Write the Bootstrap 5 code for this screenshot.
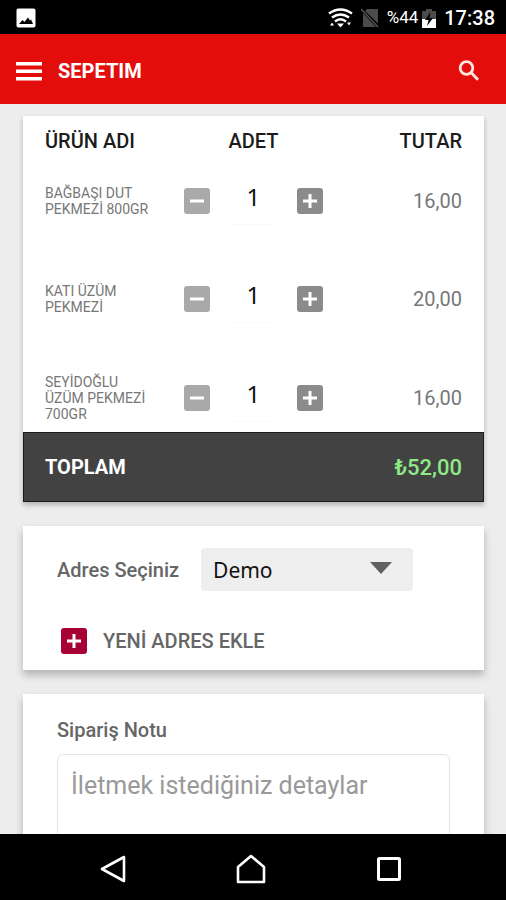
<!DOCTYPE html>
<html lang="tr">
<head>
<meta charset="utf-8">
<meta name="viewport" content="width=device-width, initial-scale=1">
<title>Sepetim</title>
<link href="https://cdn.jsdelivr.net/npm/bootstrap@5.3.0/dist/css/bootstrap.min.css" rel="stylesheet">
<style>
body { font-family: Roboto, "Noto Sans", sans-serif; background: #ededed; color: #666; }
svg { display: block; }
.status-bar { height: 34px; padding: 2px 11px 0 16px; font-size: 17px; }
.status-bar .clock { font-size: 20px; font-weight: 500; }
.app-bar { height: 70px; padding: 3px 22px 0 12px; background: #e30e0c; }
.app-title { font-size: 20px; line-height: 24px; }
.content { padding: 12px 22px 0 23px; min-height: 0; }
.panel { background: #fff; padding: 22px 34px 12px; box-shadow: 0 5px 8px rgba(0,0,0,.25); }
.panel-note { padding-top: 24px; }
.cart { box-shadow: 0 3px 5px rgba(0,0,0,.25); background: #fff; table-layout: fixed; }
.cart th:first-child, .cart td:first-child { padding-left: 22px; }
.cart th:last-child, .cart td:last-child { padding-right: 22px; }
.cart thead th { height: 50px; font-size: 20px; font-weight: 500; color: #1c1c1c; }
.cart tbody td { height: 98px; padding-bottom: 30px; font-size: 20px; }
.cart tbody tr:last-child td { height: 70px; padding-bottom: 0; }
.cart tbody td.product { font-size: 14px; line-height: 16px; padding-right: 20px; color: #777; }
.cart tbody td.price { color: #777; }
.cart tfoot { background: #424242; outline: 1px solid #1b1b1b; outline-offset: -1px; }
.cart tfoot th { height: 70px; font-size: 20px; color: #fff; }
.cart tfoot td { font-size: 22px; font-weight: 500; color: #8ee986; }
.step { width: 26px; height: 26px; border-radius: 3px; background: #8b8b8b; }
.step-minus { background: #a9a9a9; }
.step-add { background: #a60034; }
.qty { width: 47px; height: 48px; font: 24px "Noto Sans", sans-serif; color: #111; border-bottom: 1px solid #fafafa; }
.field-label { font-size: 20px; line-height: 24px; font-weight: 500; color: #666; }
.address-box { margin-left: 22px; }
.address { width: 212px; height: 43px; padding: 0 12px; font: 21px "Noto Sans", sans-serif; color: #111; background: #eee; appearance: none; }
.caret { position: absolute; right: 21px; top: 14px; pointer-events: none; }
.add-address { margin-top: 33px; }
.note { height: 120px; margin-top: 12px; padding: 14px 13px; font-size: 25px; line-height: 34px; border: 1px solid #e4e4e4; border-radius: 6px; resize: none; }
.note::placeholder { color: #999; opacity: 1; }
.nav-keys { height: 66px; padding: 4px 104px 0 100px; }
</style>
<script src="https://cdn.jsdelivr.net/npm/bootstrap@5.3.0/dist/js/bootstrap.bundle.min.js"></script>
</head>
<body class="vh-100 d-flex flex-column overflow-hidden">
<div class="status-bar bg-black text-white d-flex align-items-center flex-shrink-0">
  <svg class="me-auto" width="20" height="20" viewBox="0 0 20 20"><rect x="0.5" y="0.5" width="19" height="19" rx="2" fill="#fff"/><path d="M3 16l3.500-4 2 2 3.500-4.500 2 3 1-1 2 4.500z" fill="#000"/></svg>
  <svg width="25" height="20" viewBox="0 0 25 20" fill="none" stroke="#fff" stroke-width="2.500"><path d="M1 5.500Q12.500-2.500 24 5.500M4 9.500Q12.500 3.500 21 9.500M7 13.500Q12.500 9 18 13.500"/><path d="M9 15.500h7l-3.500 4zM2 17.500l2-3 2 3zM19 14.500h4l-2 3z" fill="#fff" stroke="none"/></svg>
  <svg class="ms-2" width="18" height="20" viewBox="0 0 18 20"><path d="M6 1h11v14.500L4 3zM2 5l13 14H2z" fill="#4b4b4b"/><path d="M0 1l17 18" stroke="#555" stroke-width="1.500"/></svg>
  <span class="ms-2">%44</span>
  <svg class="ms-1" width="14" height="21" viewBox="0 0 14 21"><path d="M4 1h6v2h4v8H0V3h4z" fill="#4b4b4b"/><path d="M0 11h14v9H0z" fill="#fff"/><path d="M8.500 4L3 12h3.500L5 18l6-8H7.500z" fill="#000"/></svg>
  <span class="clock ms-1 ps-1">17:38</span>
</div>
<header class="app-bar text-white d-flex align-items-center flex-shrink-0">
  <button class="btn p-1 border-0 text-white" type="button" aria-label="Menü"><svg width="26" height="20" viewBox="0 0 26 20" fill="#fff"><path d="M0 1h26v3.500H0zM0 8.500h26V12H0zM0 16h26v3.500H0z"/></svg></button>
  <h1 class="app-title fw-bold mb-0 ms-2 ps-1">SEPETIM</h1>
  <button class="btn p-1 border-0 ms-auto" type="button" aria-label="Ara"><svg width="22" height="22" viewBox="0 0 22 22" fill="none" stroke="#ffe5e0" stroke-width="2.800"><circle cx="8.500" cy="8" r="6.300"/><path d="M13 12.500l7 7.200"/></svg></button>
</header>
<main class="content flex-grow-1 overflow-hidden">
  <table class="cart w-100">
    <colgroup><col style="width:33%"><col style="width:34%"><col style="width:33%"></colgroup>
    <thead><tr><th>ÜRÜN ADI</th><th class="text-center">ADET</th><th class="text-end">TUTAR</th></tr></thead>
    <tbody>
      <tr>
        <td class="product">BAĞBAŞI DUT PEKMEZİ 800GR</td>
        <td><div class="d-flex align-items-center justify-content-center gap-3"><button class="step step-minus border-0 p-0 flex-shrink-0 me-1" type="button" aria-label="Azalt"><svg width="26" height="26" viewBox="0 0 26 26"><path d="M6 13h14" stroke="#fff" stroke-width="3"/></svg></button><input class="qty border-top-0 border-start-0 border-end-0 text-center p-0 pb-2 bg-transparent" type="text" value="1" aria-label="Bağbaşı Dut Pekmezi adedi"><button class="step border-0 p-0 flex-shrink-0 ms-1" type="button" aria-label="Artır"><svg width="26" height="26" viewBox="0 0 26 26"><path d="M6 13h14M13 6v14" stroke="#fff" stroke-width="3"/></svg></button></div></td>
        <td class="price text-end">16,00</td>
      </tr>
      <tr>
        <td class="product">KATI ÜZÜM PEKMEZİ</td>
        <td><div class="d-flex align-items-center justify-content-center gap-3"><button class="step step-minus border-0 p-0 flex-shrink-0 me-1" type="button" aria-label="Azalt"><svg width="26" height="26" viewBox="0 0 26 26"><path d="M6 13h14" stroke="#fff" stroke-width="3"/></svg></button><input class="qty border-top-0 border-start-0 border-end-0 text-center p-0 pb-2 bg-transparent" type="text" value="1" aria-label="Katı Üzüm Pekmezi adedi"><button class="step border-0 p-0 flex-shrink-0 ms-1" type="button" aria-label="Artır"><svg width="26" height="26" viewBox="0 0 26 26"><path d="M6 13h14M13 6v14" stroke="#fff" stroke-width="3"/></svg></button></div></td>
        <td class="price text-end">20,00</td>
      </tr>
      <tr>
        <td class="product">SEYİDOĞLU ÜZÜM PEKMEZİ 700GR</td>
        <td><div class="d-flex align-items-center justify-content-center gap-3"><button class="step step-minus border-0 p-0 flex-shrink-0 me-1" type="button" aria-label="Azalt"><svg width="26" height="26" viewBox="0 0 26 26"><path d="M6 13h14" stroke="#fff" stroke-width="3"/></svg></button><input class="qty border-top-0 border-start-0 border-end-0 text-center p-0 pb-2 bg-transparent" type="text" value="1" aria-label="Seyidoğlu Üzüm Pekmezi adedi"><button class="step border-0 p-0 flex-shrink-0 ms-1" type="button" aria-label="Artır"><svg width="26" height="26" viewBox="0 0 26 26"><path d="M6 13h14M13 6v14" stroke="#fff" stroke-width="3"/></svg></button></div></td>
        <td class="price text-end">16,00</td>
      </tr>
    </tbody>
    <tfoot><tr><th colspan="2">TOPLAM</th><td class="text-end">₺52,00</td></tr></tfoot>
  </table>
  <section class="panel mt-4">
    <div class="d-flex align-items-center">
      <label class="field-label" for="address">Adres Seçiniz</label>
      <div class="address-box position-relative">
        <select class="address border-0 rounded-1" id="address"><option>Demo</option></select>
        <svg class="caret" width="22" height="12" viewBox="0 0 22 12"><path d="M0 0h22L11 12z" fill="#606060"/></svg>
      </div>
    </div>
    <button class="add-address btn border-0 p-1 d-flex align-items-center" type="button">
      <span class="step step-add"><svg width="26" height="26" viewBox="0 0 26 26"><path d="M6 13h14M13 6v14" stroke="#fff" stroke-width="3"/></svg></span>
      <span class="field-label ms-3">YENİ ADRES EKLE</span>
    </button>
  </section>
  <section class="panel panel-note mt-4">
    <label class="field-label d-block" for="note">Sipariş Notu</label>
    <textarea class="note d-block w-100" id="note" placeholder="İletmek istediğiniz detaylar"></textarea>
  </section>
</main>
<nav class="nav-keys bg-black d-flex align-items-center justify-content-between flex-shrink-0">
  <button class="btn p-0 border-0" type="button" aria-label="Geri"><svg width="26" height="28" viewBox="0 0 26 28" fill="none" stroke="#fff" stroke-width="2.600" stroke-linejoin="round"><path d="M2 14L24 2v24z"/></svg></button>
  <button class="btn p-0 border-0" type="button" aria-label="Ana ekran"><svg width="30" height="30" viewBox="0 0 30 30" fill="none" stroke="#fff" stroke-width="2.600" stroke-linejoin="round"><path d="M2 28V13L15 2l13 11v15z"/></svg></button>
  <button class="btn p-0 border-0" type="button" aria-label="Son uygulamalar"><svg width="26" height="26" viewBox="0 0 26 26" fill="none" stroke="#fff" stroke-width="3"><rect x="2.500" y="2.500" width="21" height="21" rx="1"/></svg></button>
</nav>
</body>
</html>
